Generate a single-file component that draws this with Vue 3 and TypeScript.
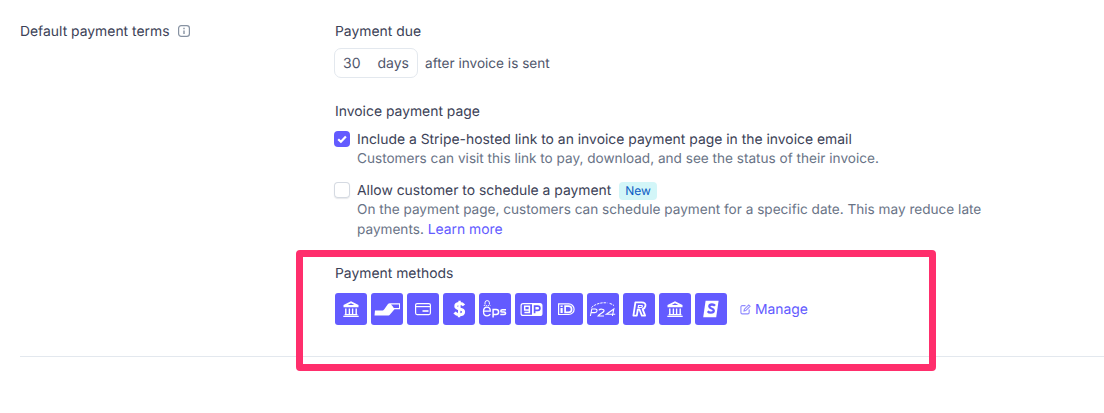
<script setup lang="ts">
const bankPaths = {
  roof: 'M16 8.200l7.500 3.900v2.100h-15v-2.100L16 8.200z',
  hole: 'M16 10.200l-3.300 1.900h6.600L16 10.200z',
  lines: 'M10.800 15.400v5.500M14.400 15.400v5.500M17.600 15.400v5.500M21.200 15.400v5.500M9.600 21.600h12.800M8.300 23.400h15.400',
}
</script>

<template>
  <div class="page">
    <section class="terms">
      <div class="terms__label">
        <span class="strong">Default payment terms</span>
        <svg class="info" width="12" height="12" viewBox="0 0 12 12" fill="none">
          <rect x="0.6" y="0.6" width="10.8" height="10.8" rx="2.6" stroke="#8792a2" stroke-width="1.2" />
          <path d="M6 2.800v1.400M6 5.400v3.600" stroke="#8792a2" stroke-width="1.400" />
        </svg>
      </div>

      <div class="terms__body">
        <div class="title strong">Payment due</div>
        <div class="due">
          <div class="due__input">
            <span class="due__num">30</span>
            <span>days</span>
          </div>
          <span class="due__after">after invoice is sent</span>
        </div>

        <div class="title title--page strong">Invoice payment page</div>
        <div class="option option--first">
          <span class="check check--on">
            <svg width="12" height="12" viewBox="0 0 12 12" fill="none">
              <path d="M2.200 6.300l2.700 2.500 5-5.200" stroke="#fff" stroke-width="2.200" />
            </svg>
          </span>
          <div>
            <div class="option__name strong">Include a Stripe-hosted link to an invoice payment page in the invoice email</div>
            <div class="option__desc">Customers can visit this link to pay, download, and see the status of their invoice.</div>
          </div>
        </div>
        <div class="option">
          <span class="check"></span>
          <div>
            <div class="option__name strong">
              Allow customer to schedule a payment
              <span class="badge">New</span>
            </div>
            <div class="option__desc">
              On the payment page, customers can schedule payment for a specific date. This may reduce late<br />
              payments. <a class="link">Learn more</a>
            </div>
          </div>
        </div>

        <div class="title title--methods strong">Payment methods</div>
        <div class="methods">
          <span class="method">
            <svg viewBox="0 0 32 32" fill="none">
              <path :d="bankPaths.roof" fill="#fff" />
              <path :d="bankPaths.hole" fill="#635bff" />
              <path :d="bankPaths.lines" stroke="#fff" stroke-width="1.400" />
            </svg>
          </span>
          <span class="method">
            <svg viewBox="0 0 32 32" fill="none">
              <path d="M4 17.500h7c1 0 1.700-.5 2.300-1.300L17 11c.5-.6 1-.8 1.800-.8H29v6h-5.500L19 21.500c-.5.6-1 1-2 1H3.500z" fill="#fff" />
              <path d="M20 11.500h8V15h-5.200c-.8-1.500-1.800-2.500-2.800-3.500z" fill="#635bff" />
            </svg>
          </span>
          <span class="method">
            <svg viewBox="0 0 32 32" fill="none">
              <rect x="8.600" y="10.600" width="14.800" height="11" rx="1.500" stroke="#fff" stroke-width="1.200" />
              <path d="M8.600 13.600h14.800" stroke="#fff" stroke-width="1.200" />
              <path d="M15.500 18h6" stroke="#fff" stroke-width="1.600" />
            </svg>
          </span>
          <span class="method">
            <svg viewBox="0 0 32 32" fill="none">
              <path d="M21 12.400c-1-1.200-2.600-1.800-4.300-1.800-2.400 0-3.900 1.100-3.900 2.700 0 3.700 7.800 1.700 7.800 5.400 0 1.700-1.600 3-4.200 3-2.100 0-3.700-.7-4.900-2.100" stroke="#fff" stroke-width="3" />
              <path d="M16.600 7.700l-.6 16.600" stroke="#fff" stroke-width="2.400" />
            </svg>
          </span>
          <span class="method">
            <svg viewBox="0 0 32 32" fill="none">
              <path d="M6 11.500V9.800a2.200 2.200 0 0 1 4.400 0v1.700" stroke="#fff" stroke-width="1" />
              <path d="M4.800 12.500h6.600" stroke="#fff" stroke-width="1" stroke-dasharray="1 1" />
              <path d="M4.500 18.200h6.800c0-2.600-1.400-4-3.400-4s-3.400 1.600-3.400 4.200 1.500 4.400 3.600 4.400c1.400 0 2.400-.5 3.200-1.600" stroke="#fff" stroke-width="1.300" />
              <path d="M14.100 24.500v-8h3a2.500 2.500 0 0 1 0 5h-3" stroke="#fff" stroke-width="1.500" />
              <path d="M27 16.800h-3.700c-2 0-2 2.300 0 2.300h1.800c2 0 2 2.300 0 2.300h-3.800" stroke="#fff" stroke-width="1.500" />
            </svg>
          </span>
          <span class="method">
            <svg viewBox="0 0 32 32" fill="none">
              <rect x="6.100" y="10.600" width="20.800" height="11.800" rx="2" stroke="#fff" stroke-width="1.200" />
              <path d="M17 10.600h7.900a2 2 0 0 1 2 2v7.800a2 2 0 0 1-2 2H17z" fill="#fff" />
              <path d="M14.400 13.200H9.700v3.800h4.700zM14.400 13.200v6.400H9.400" stroke="#fff" stroke-width="1.500" />
              <path d="M19.600 20.300v-7.200h3.200a2 2 0 0 1 0 4.200h-3.200" stroke="#635bff" stroke-width="1.700" />
            </svg>
          </span>
          <span class="method">
            <svg viewBox="0 0 32 32" fill="none">
              <path d="M7.600 10.900h10.200a5.300 5.300 0 0 1 0 10.600H7.600z" stroke="#fff" stroke-width="1.200" />
              <path d="M10.600 15v5M10.600 12.600v1.300" stroke="#fff" stroke-width="2.200" />
              <path d="M14.100 13.200h3.400a3 3 0 0 1 0 6.200h-3.400z" stroke="#fff" stroke-width="1.700" />
            </svg>
          </span>
          <span class="method">
            <svg viewBox="0 0 32 32" fill="none">
              <path d="M4.500 14.500c3.800-3.600 9.600-5.300 15.800-4.600M22.600 10.400c1.800.4 3.300 1.200 4.400 2.200" stroke="#fff" stroke-width="1" stroke-dasharray="2.400 .9" />
              <path d="M3.400 23l1.400-7h3.600c2.400 0 2.200 3.600-.6 3.600H4.300M11.800 17.300c1.200-1.700 5.600-1.500 5.200.7-.4 1.700-4.500 2.700-6 5h6M25.400 23l1.400-7-7.400 5.200h8.800" stroke="#fff" stroke-width="1.100" />
            </svg>
          </span>
          <span class="method">
            <svg viewBox="0 0 32 32" fill="none">
              <path d="M12.400 9.400h6.200c2.900 0 4.300 1.400 3.800 3.600-.3 1.500-1.300 2.600-2.800 3.100l2.500 6.500h-3.200l-2.400-6.100h-1.700l-1 6.100h-3.400z" stroke="#fff" stroke-width="1.800" stroke-linejoin="round" />
              <path d="M15 12h3.300c1.200 0 1.800.5 1.600 1.400-.2 1-1.100 1.500-2.400 1.500h-3z" fill="#fff" />
              <path d="M16 13h2.200c.5 0 .8.200.7.500-.1.300-.5.500-1 .5h-2.100z" fill="#635bff" />
            </svg>
          </span>
          <span class="method">
            <svg viewBox="0 0 32 32" fill="none">
              <path :d="bankPaths.roof" fill="#fff" />
              <path :d="bankPaths.hole" fill="#635bff" />
              <path :d="bankPaths.lines" stroke="#fff" stroke-width="1.400" />
            </svg>
          </span>
          <span class="method">
            <svg viewBox="0 0 32 32" fill="none">
              <path d="M10.600 7.800h13l-2.400 16.400H8.200z" fill="#fff" />
              <path d="M20 12.800c-.7-.9-1.800-1.300-3-1.300-1.600 0-2.700.9-2.700 2 0 2.600 4.500 1.400 4.500 4 0 1.300-1.200 2.100-2.900 2.100-1.300 0-2.500-.5-3.200-1.400" stroke="#635bff" stroke-width="2.300" />
            </svg>
          </span>
          <a class="manage">
            <svg width="11" height="11" viewBox="0 0 12 12" fill="none">
              <path d="M6 1.800H2.400a1.400 1.400 0 0 0-1.400 1.400v6.200c0 .8.600 1.400 1.400 1.400h6.200c.8 0 1.400-.6 1.400-1.400V6" stroke="#8f8aff" stroke-width="1.200" />
              <path d="M4.400 7.600l.4-1.900L9.500 1l1.500 1.500-4.700 4.700z" stroke="#8f8aff" stroke-width="1.200" />
            </svg>
            Manage
          </a>
        </div>
      </div>
    </section>

    <div class="highlight"></div>
  </div>
</template>

<style>
html,
body {
  background: #fff;
  margin: 0;
}
</style>

<style scoped>
.page {
  color: #4f566b;
  font-family: Inter, "Liberation Sans", sans-serif;
  font-size: 13.6px;
  height: 413px;
  line-height: 20px;
  overflow: hidden;
  position: relative;
  text-rendering: geometricPrecision;
  width: 1104px;
}

.strong {
  color: #3c4257;
  font-size: 13.9px;
}

.terms {
  border-bottom: 1px solid #e3e8ee;
  display: flex;
  height: 334px;
  margin-left: 20px;
  padding-top: 22px;
}

.terms__label {
  align-items: center;
  display: flex;
  gap: 8px;
  height: 20px;
  width: 315px;
}

.info {
  flex-shrink: 0;
  margin-top: -2px;
}

.title--page {
  margin-top: 24px;
}

.title--methods {
  margin-top: 24px;
}

.due {
  align-items: center;
  display: flex;
  gap: 7px;
  margin-top: 6px;
}

.due__input {
  align-items: center;
  border: 1px solid #e3e8ee;
  border-radius: 7px;
  box-sizing: border-box;
  display: flex;
  font-size: 14px;
  height: 30px;
  margin-left: -1px;
  padding: 1px 8px 0;
  width: 84px;
}

.due__num {
  width: 35px;
}

.due__after {
  padding-top: 1px;
}

.option {
  display: flex;
  gap: 7px;
  margin-top: 12px;
}

.option--first {
  margin-top: 8px;
}

.check {
  background: #fff;
  border-radius: 4px;
  box-shadow: 0 0 0 1px #d5dae2 inset, 0 1px 1px rgba(60, 66, 87, 0.12);
  flex-shrink: 0;
  height: 16px;
  margin-left: -1px;
  margin-top: 1px;
  width: 16px;
}

.check--on {
  align-items: center;
  background: #635bff;
  box-shadow: none;
  display: flex;
  justify-content: center;
}

.option__desc {
  color: #697386;
  margin-top: -1px;
}

.badge {
  background: #d3f6f8;
  border-radius: 4px;
  color: #0b5cc4;
  display: inline-block;
  font-size: 12px;
  line-height: 18px;
  margin-left: 4px;
  padding: 0 6px;
}

.link,
.manage {
  color: #635bff;
  font-size: 13.9px;
}

.methods {
  align-items: center;
  display: flex;
  gap: 4px;
  margin-top: 9px;
}

.method {
  background: #635bff;
  border-radius: 3px;
  display: block;
  height: 32px;
  width: 32px;
}

.method svg {
  display: block;
  height: 32px;
  width: 32px;
}

.manage {
  align-items: center;
  display: flex;
  gap: 4px;
  margin-left: 9px;
  padding-top: 1px;
}

.manage svg {
  margin-top: -1px;
}

.highlight {
  border: 7px solid #ff2e6c;
  border-radius: 4px;
  box-sizing: border-box;
  height: 121px;
  left: 296px;
  position: absolute;
  top: 250px;
  width: 640px;
}
</style>
